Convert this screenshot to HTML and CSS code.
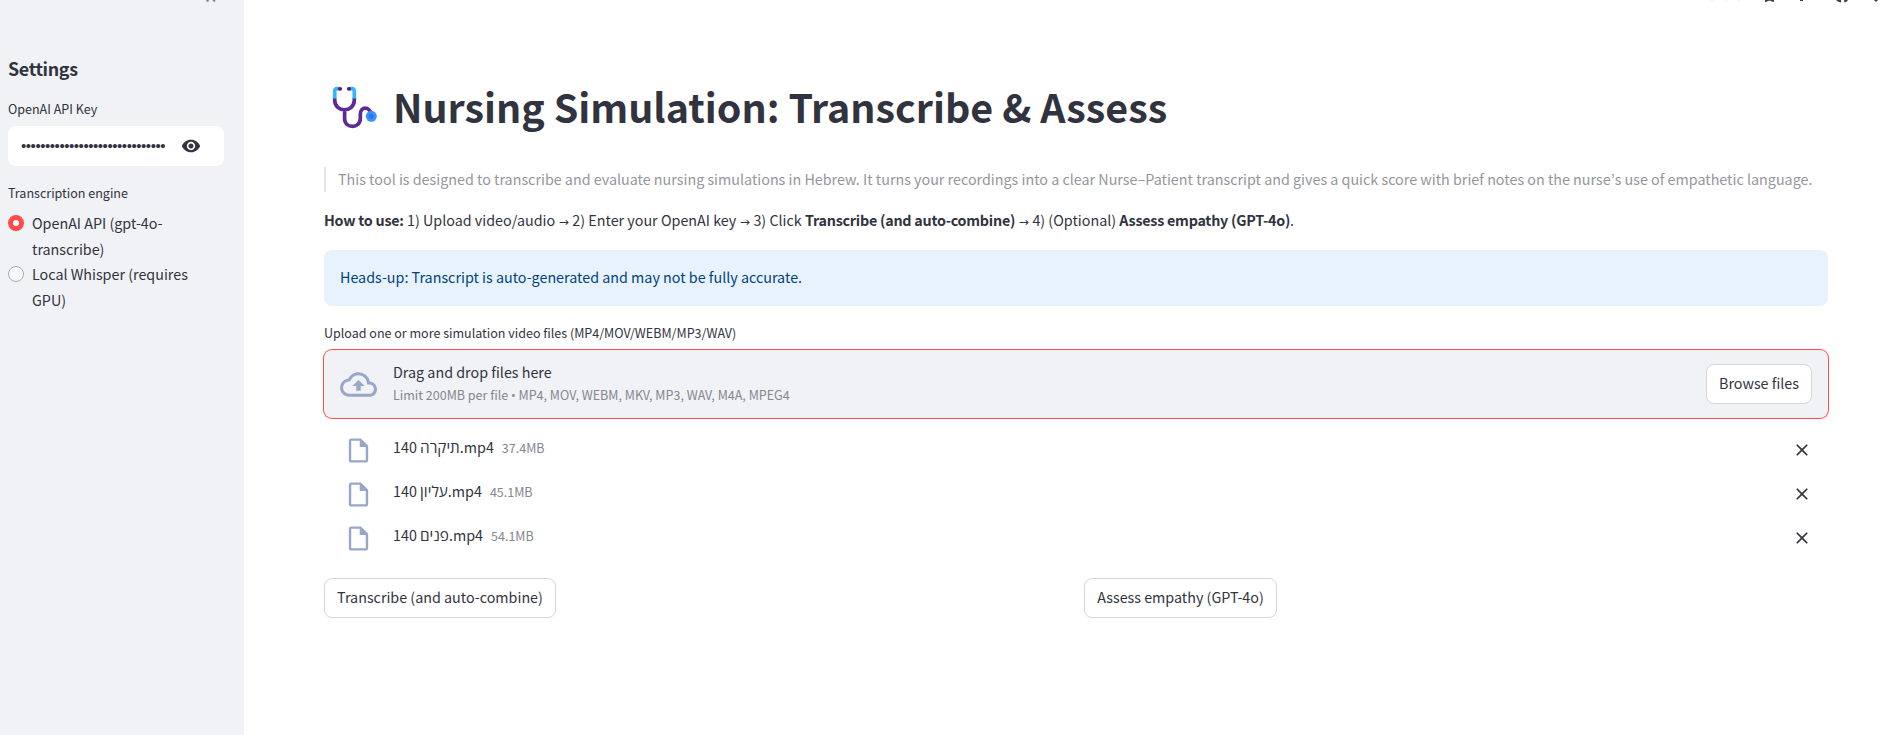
FILE: index.html
```html
<!DOCTYPE html>
<html lang="en">
<head>
<meta charset="utf-8">
<title>Nursing Simulation: Transcribe &amp; Assess</title>
<link rel="stylesheet" href="styles.css">
</head>
<body>
<div class="app">
  <aside class="sidebar">
    <div class="sidebar-top"><svg width="14" height="3" viewBox="0 0 14 3"><path d="M1.500 -.5l2 2M8 -.5l2 2" stroke="#82848d" stroke-width="1.800" fill="none"/></svg></div>
    <h2 class="settings">Settings</h2>
    <label class="label">OpenAI API Key</label>
    <div class="key">
      <span class="dots">••••••••••••••••••••••••••••••</span>
      <svg class="eye" viewBox="0 0 24 24" width="20" height="20"><path fill="#31333f" d="M12 4.500C7 4.500 2.730 7.610 1 12c1.730 4.390 6 7.500 11 7.500s9.270-3.110 11-7.500c-1.730-4.390-6-7.500-11-7.500zM12 17c-2.760 0-5-2.240-5-5s2.240-5 5-5 5 2.240 5 5-2.240 5-5 5zm0-8c-1.660 0-3 1.340-3 3s1.340 3 3 3 3-1.340 3-3-1.340-3-3-3z"/></svg>
    </div>
    <div class="label engine">Transcription engine</div>
    <div class="radio"><i class="dot on"></i><span>OpenAI API (gpt-4o-transcribe)</span></div>
    <div class="radio"><i class="dot"></i><span>Local Whisper (requires GPU)</span></div>
  </aside>
  <main class="main">
    <div class="toolbar">
      <svg width="190" height="4" viewBox="-10 0 190 4"><path d="M2 0h2M16 0h2M29 0h2" stroke="#ddd" fill="none"/><path d="M56 0h9v2l-2-.5-2.500-1-2.500 1-2 .8zM91 0h3v1h-3zM127 0h5v2.500q-3-.5-5-2.500zM135 0h4q-1 2-3.500 2.500zM165 0h4l-2 2z" fill="#3d3f4a"/></svg>
    </div>
    <h1 class="title">
      <svg class="steth" width="46" height="44" viewBox="0 0 46 44" fill="none">
        <path d="M2.700 13v2c0 13 19.600 13 19.600 0v-2M12.600 24.500v9c0 10.500 15.700 10.500 15.700 0v-4c0-8.500 9.500-8.500 11 0" stroke="#5b2d94" stroke-width="3.700"/>
        <path d="M2.700 13.500V6q0-2.300 2.300-2.300h2M22.300 13.500V6q0-2.300-2.300-2.300h-2" stroke="#37b3ff" stroke-width="3.700"/>
        <path d="M7.700 3.900h.6M16.700 3.900h.6" stroke="#4b2577" stroke-width="3.600" stroke-linecap="round"/>
        <circle cx="39.300" cy="31.300" r="5.500" fill="#3a91ff"/><circle cx="39.300" cy="31.300" r="2.600" fill="#2f74ec"/>
      </svg>
      <span>Nursing Simulation: Transcribe &amp; Assess</span>
    </h1>
    <blockquote class="quote">This tool is designed to transcribe and evaluate nursing simulations in Hebrew. It turns your recordings into a clear Nurse–Patient transcript and gives a quick score with brief notes on the nurse<span class="apos">’</span>s use of empathetic language.</blockquote>
    <p class="how"><b>How to use:</b> 1) Upload video/audio <span class="arr">→</span> 2) Enter your OpenAI key <span class="arr">→</span> 3) Click <b>Transcribe (and auto-combine)</b> <span class="arr">→</span> 4) (Optional) <b>Assess empathy (GPT-4o)</b>.</p>
    <div class="alert">Heads-up: Transcript is auto-generated and may not be fully accurate.</div>
    <div class="label upload-label">Upload one or more simulation video files (MP4/MOV/WEBM/MP3/WAV)</div>
    <section class="drop">
      <svg class="cloud" width="37" height="37" viewBox="0 0 24 24" fill="#98a6c8"><path d="M19.350 10.040A7.490 7.490 0 0012 4C9.110 4 6.600 5.640 5.350 8.040A5.994 5.994 0 000 14c0 3.310 2.690 6 6 6h13c2.760 0 5-2.240 5-5 0-2.640-2.050-4.780-4.650-4.960zM19 18H6c-2.210 0-4-1.790-4-4 0-2.050 1.530-3.760 3.560-3.970l1.070-.11.5-.95A5.469 5.469 0 0112 6c2.620 0 4.880 1.860 5.390 4.430l.3 1.500 1.530.11A2.980 2.980 0 0122 15c0 1.650-1.350 3-3 3zM8 13h2.550v3h2.900v-3H16l-4-4z"/></svg>
      <div class="drop-text"><span>Drag and drop files here</span><small>Limit 200MB per file <i class="bull">•</i> MP4, MOV, WEBM, MKV, MP3, WAV, M4A, MPEG4</small></div>
      <button class="btn browse">Browse files</button>
    </section>
    <ul class="files">
      <li><svg class="doc" width="29" height="29" viewBox="0 0 24 24"><path d="M6 2c-1.100 0-1.990.9-1.990 2L4 20c0 1.100.89 2 1.990 2H18c1.100 0 2-.9 2-2V8l-6-6H6zm0 18V4h7v5h5v11H6z"/></svg><div class="info"><span class="name">140 <span class="he">תיקרה</span>.mp4</span><small>37.4MB</small></div><svg class="x" width="20" height="20" viewBox="0 0 24 24"><path d="M19 6.410L17.590 5 12 10.590 6.410 5 5 6.410 10.590 12 5 17.590 6.410 19 12 13.410 17.590 19 19 17.590 13.410 12z"/></svg></li>
      <li><svg class="doc" width="29" height="29" viewBox="0 0 24 24"><path d="M6 2c-1.100 0-1.990.9-1.990 2L4 20c0 1.100.89 2 1.990 2H18c1.100 0 2-.9 2-2V8l-6-6H6zm0 18V4h7v5h5v11H6z"/></svg><div class="info"><span class="name">140 <span class="he">עליון</span>.mp4</span><small>45.1MB</small></div><svg class="x" width="20" height="20" viewBox="0 0 24 24"><path d="M19 6.410L17.590 5 12 10.590 6.410 5 5 6.410 10.590 12 5 17.590 6.410 19 12 13.410 17.590 19 19 17.590 13.410 12z"/></svg></li>
      <li><svg class="doc" width="29" height="29" viewBox="0 0 24 24"><path d="M6 2c-1.100 0-1.990.9-1.990 2L4 20c0 1.100.89 2 1.990 2H18c1.100 0 2-.9 2-2V8l-6-6H6zm0 18V4h7v5h5v11H6z"/></svg><div class="info"><span class="name">140 <span class="he">פנים</span>.mp4</span><small>54.1MB</small></div><svg class="x" width="20" height="20" viewBox="0 0 24 24"><path d="M19 6.410L17.590 5 12 10.590 6.410 5 5 6.410 10.590 12 5 17.590 6.410 19 12 13.410 17.590 19 19 17.590 13.410 12z"/></svg></li>
    </ul>
    <div class="actions">
      <div><button class="btn transcribe">Transcribe (and auto-combine)</button></div>
      <div><button class="btn assess">Assess empathy (GPT-4o)</button></div>
    </div>
  </main>
</div>
</body>
</html>
```

FILE: styles.css
```css
* { box-sizing: border-box; }
body {
  margin: 0;
  background: #fff;
  color: #31333f;
  font-family: "Noto Sans CJK SC", "Open Sans", sans-serif;
  font-size: 14.32px;
  line-height: 25.6px;
}
svg { display: block; flex: none; }
.app { display: flex; height: 735px; overflow: hidden; }
.sidebar { width: 244px; flex: none; background: #f0f2f6; padding: 0 20px 0 8px; }
.sidebar-top { height: 54px; padding-left: 197px; }
.settings { margin: 0 0 16px; font-size: 17.9px; line-height: 28px; font-weight: 700; letter-spacing: -0.35px; }
.label { display: block; font-size: 12.53px; line-height: 21px; }
.sidebar label.label { margin: 0 0 7px; }
.key { height: 40px; width: 216px; background: #fff; border-radius: 8px; display: flex; align-items: center; padding-left: 13px; }
.dots { width: 144px; overflow: hidden; white-space: nowrap; font-family: "Liberation Sans", sans-serif; font-size: 15px; letter-spacing: -0.45px; }
.eye { margin-left: 16px; }
.engine { margin-top: 16px; margin-bottom: 7px; }
.radio { display: flex; gap: 8px; width: 200px; }
.dot { flex: none; width: 16px; height: 16px; margin-top: 5px; border-radius: 50%; background: #f9f9fb; border: 1px solid #a9abb5; }
.dot.on { background: #fff; border: 5px solid #ff4b4b; }
.main { flex: 1; padding: 0 61px 0 80px; }
.toolbar { height: 4px; display: flex; justify-content: flex-end; margin-right: -61px; }
.title { display: flex; margin: 75px 0 0; height: 58px; font-size: 39.4px; line-height: 54px; font-weight: 700; white-space: nowrap; }
.steth { margin: 6px 15px 0 8px; }
.quote { margin: 30px 0 0; height: 25px; border-left: 2px solid #e6e6ea; padding-left: 12px; color: #95969d; white-space: nowrap; line-height: 23px; }
.apos { font-family: "Noto Sans CJK KR", sans-serif; line-height: 1; }
.how { margin: 16px 0 0; height: 26px; line-height: 24px; white-space: nowrap; }
.how b { letter-spacing: -0.24px; }
.arr { display: inline-block; width: 10.8px; text-align: center; font-family: "DejaVu Sans", sans-serif; font-size: 12px; line-height: 1; }
.alert { margin-top: 16px; height: 56px; border-radius: 8px; background: #e8f2fc; color: #004280; padding: 14px 16px; }
.upload-label { margin: 16px 0 7px; }
.drop { height: 68px; border-radius: 8px; background: #f0f2f6; box-shadow: 0 0 0 1px #ff4b4b; display: flex; align-items: center; padding: 0 16px; }
.drop-text { display: flex; flex-direction: column; margin: 0 0 3px 16px; flex: 1; }
.drop-text span { line-height: 24px; }
small { font-size: 12.53px; line-height: 21px; color: #85868e; }
.bull { font-family: "Open Sans", sans-serif; font-style: normal; line-height: 1; }
.btn { height: 40px; border: 1px solid #d6d6d9; border-radius: 8px; background: #fff; color: inherit; font: inherit; padding: 0 0 2px; white-space: nowrap; }
.browse { width: 106px; }
.transcribe { width: 232px; }
.assess { width: 193px; }
.files { list-style: none; margin: 10px 0 0; padding: 0; }
.files li { height: 44px; display: flex; align-items: center; padding: 0 16px 0 20px; }
.doc { fill: #98a6c8; }
.info { display: flex; align-items: baseline; gap: 8px; margin: 0 0 6px 20px; }
.he { font-family: "Open Sans", "Noto Sans", "DejaVu Sans", sans-serif; font-size: 15.3px; line-height: 20px; }
.x { margin-left: auto; fill: #31333f; }
.actions { display: grid; grid-template-columns: 1fr 1fr; gap: 16px; margin-top: 18px; }
```
